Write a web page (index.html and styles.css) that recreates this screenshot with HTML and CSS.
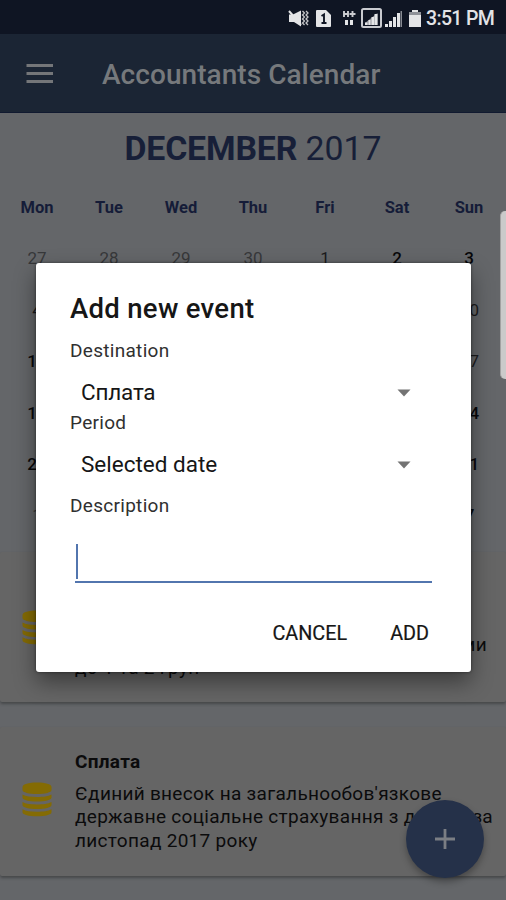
FILE: index.html
```html
<!DOCTYPE html>
<html lang="uk">
<head>
<meta charset="utf-8">
<title>Accountants Calendar</title>
<link rel="stylesheet" href="styles.css">
</head>
<body>
<div class="screen">
  <header class="status">
    <svg class="status-icons" width="136" height="24" viewBox="0 0 136 24" fill="#e4e5e7">
      <path d="M1 8.500h4l8-4v16l-7-4.500H1z"/>
      <path d="M1 5l12 14" stroke="#e4e5e7" stroke-width="2"/>
      <path d="M14.500 5l2 2-2 2 2 2-2 2 2 2-2 2 2 2M18 5l2 2-2 2 2 2-2 2 2 2-2 2 2 2" fill="none" stroke="#c4c5c8" stroke-width="1.3"/>
      <path d="M29 4h9l5 5v11a1 1 0 0 1-1 1H29a1 1 0 0 1-1-1V5a1 1 0 0 1 1-1z"/>
      <path d="M33.500 10l2.500-1.500V17M33.500 17h5" fill="none" stroke="#0f1523" stroke-width="1.900"/>
      <path d="M56 5v6M60 5v6M56 8h4M61.500 8h6M64.500 5v6" fill="none" stroke="#cbccd0" stroke-width="1.900"/>
      <path d="M57 14h3v5h-3zM62 14h3v5h-3z"/>
      <rect x="74" y="3" width="19" height="18" rx="1.500" fill="none" stroke="#c9cbd0" stroke-width="2"/>
      <path d="M77 19V17L89.500 7v12z" fill="#8d9097"/>
      <path d="M77 16.500h2.500v2.500H77zM80.500 14h2v5h-2zM83.500 11h2.500v8h-2.500zM86.500 8h3v11h-3z"/>
      <path d="M97 18h3v3h-3zM101 15h3v6h-3zM105 11h3v10h-3zM109 7h3v14h-3z"/>
      <path d="M112.500 5h1.500v16h-1.500z" fill="#888b93"/>
      <path d="M124 4h6v2h3v15h-12V6h3z"/><path d="M121 6h12v3h-12z" fill="#8f9299"/>
    </svg>
    <span class="clock">3:51 PM</span>
  </header>

  <div class="appbar">
    <svg class="menu" width="28" height="21" viewBox="0 0 28 21" fill="#747679"><path d="M.5 1h26.500v3H.5zM.5 9h26.500v3H.5zM.5 17h26.500v3H.5z"/></svg>
    <h1>Accountants Calendar</h1>
  </div>

  <main>
    <section class="calendar">
      <h2><b>DECEMBER</b> 2017</h2>
      <div class="week names"><span>Mon</span><span>Tue</span><span>Wed</span><span>Thu</span><span>Fri</span><span>Sat</span><span>Sun</span></div>
      <div class="week"><i>27</i><i>28</i><i>29</i><i>30</i><span>1</span><b>2</b><b>3</b></div>
      <div class="week"><span>4</span><span class="last">10</span></div>
      <div class="week"><b>11</b><span class="last">17</span></div>
      <div class="week"><b>18</b><b class="last">24</b></div>
      <div class="week"><b>25</b><b class="last">31</b></div>
      <div class="week"><i>1</i><b class="last">7</b></div>
    </section>

    <article class="card first">
      <svg class="coins" width="30" height="35" viewBox="0 0 30 35"><use href="#coins"/></svg>
      <div class="text">
        <p><span class="end">ми</span>до 1 та 2 груп</p>
      </div>
    </article>
    <article class="card">
      <svg class="coins" width="30" height="35" viewBox="0 0 30 35">
        <g id="coins" fill="#846b04">
          <path d="M.5 5C.5 2 7 .5 15 .5S29.500 2 29.500 5v3c0 2.500-6.500 4-14.500 4S.5 10.500.5 8z"/>
          <path id="coin" d="M.5 12.500c3 1.800 8.500 2.500 14.500 2.500s11.500-.7 14.500-2.500v3c0 2.500-6.500 4-14.500 4S.5 18 .5 15.500z"/>
          <use href="#coin" y="7.400"/>
          <use href="#coin" y="14.800"/>
        </g>
      </svg>
      <div class="text">
        <h3>Сплата</h3>
        <p>Єдиний внесок на загальнообов'язкове<br>державне соціальне страхування з доходу за<br>листопад 2017 року</p>
      </div>
    </article>
  </main>

  <div class="fab"><svg width="22" height="22" viewBox="0 0 22 22"><path d="M11 1v20M1 11h20" stroke="#7b7e84" stroke-width="2.800"/></svg></div>
  <div class="edge"></div>

  <section class="dialog">
    <h2>Add new event</h2>
    <label>Destination</label>
    <div class="select"><span class="v1">Сплата</span><svg width="14" height="8" viewBox="0 0 14 8"><path d="M.5.5h13L7 7.500z" fill="#737373"/></svg></div>
    <label>Period</label>
    <div class="select second"><span>Selected date</span><svg width="14" height="8" viewBox="0 0 14 8"><path d="M.5.5h13L7 7.500z" fill="#737373"/></svg></div>
    <label>Description</label>
    <div class="input"><div class="caret"></div></div>
    <div class="actions"><span class="cancel">CANCEL</span><span class="add">ADD</span></div>
  </section>
</div>
</body>
</html>
```
FILE: styles.css
```css
* { box-sizing: border-box; margin: 0; padding: 0; }
body { width: 506px; height: 900px; overflow: hidden; font-family: Roboto, "Liberation Sans", sans-serif; }
.screen { position: relative; width: 506px; height: 900px; overflow: hidden; background: #646669; color: #0b0b0c; }
.status { height: 34px; background: #0f1523; display: flex; align-items: center; padding-left: 288px; }
.status-icons { flex: none; margin-top: 1px; }
.clock { color: #e2e3e6; font-size: 19.5px; font-weight: 500; line-height: 34px; margin-left: 2px; padding-top: 3px; letter-spacing: -.65px; white-space: nowrap; }
.appbar { height: 79px; background: #1b2534; border-bottom: 1px solid #111a30; display: flex; align-items: center; padding-left: 26px; }
.menu { flex: none; margin-top: 1px; }
.appbar h1 { margin-left: 48px; margin-top: 2px; font-size: 28px; font-weight: 500; letter-spacing: .05px; color: #76797c; white-space: nowrap; }
.calendar { height: 439px; padding: 14px 1px 0; }
.calendar h2 { font-size: 33.8px; line-height: 44px; font-weight: 400; text-align: center; color: #171f38; white-space: nowrap; }
.calendar h2 b { font-weight: 700; letter-spacing: -.15px; }
.week { display: grid; grid-template-columns: repeat(7, 72px); height: 51.4px; line-height: 51.4px; text-align: center; font-size: 17px; color: #1b1b1d; }
.week b { font-weight: 500; color: #08080a; }
.week i { font-style: normal; color: #37383a; }
.week .last { grid-column: 7; padding-left: 1px; }
.week.names { font-weight: 700; font-size: 16.5px; color: #151c38; margin-top: 11px; }
.card { height: 149px; margin-bottom: 25px; background: #656565; border-radius: 2px; box-shadow: 0 2px 3px #46484a; display: flex; padding: 23px 0 0 22px; }
.card.first { height: 150px; padding-top: 26px; }
.coins { flex: none; margin-top: 32px; }
.card .text { margin-left: 23px; white-space: nowrap; }
.card h3 { font-size: 19px; line-height: 23px; font-weight: 700; letter-spacing: .3px; }
.card p { margin-top: 9px; font-size: 19px; line-height: 23.300px; letter-spacing: .3px; }
.card.first p { margin-top: 55px; }
.end { display: block; width: 412px; text-align: right; }
.fab { position: absolute; left: 406px; top: 800px; width: 78px; height: 78px; border-radius: 50%; background: #253149; display: flex; align-items: center; justify-content: center; box-shadow: 0 4px 7px rgba(0,0,0,.3); }
.edge { position: absolute; right: 0; top: 211px; width: 6px; height: 168px; border-radius: 5px 0 0 5px; background: #cacaca; border-left: 1px solid #a2a2a2; }
.dialog { position: absolute; left: 36px; top: 263px; width: 435px; height: 409px; border-radius: 3px; background: #fff; padding: 28px 40px 0 34px; box-shadow: 0 10px 22px rgba(0,0,0,.42), 0 0 3px rgba(0,0,0,.5); color: #161616; }
.dialog h2 { font-size: 27.5px; line-height: 36px; font-weight: 500; letter-spacing: .3px; white-space: nowrap; }
.dialog label { display: block; font-size: 19px; line-height: 24px; color: #303030; margin-top: 12px; letter-spacing: .3px; }
.select { display: flex; align-items: center; justify-content: space-between; height: 36px; padding: 0 20px 0 11px; margin-top: 12px; font-size: 22.5px; }
.select span { padding-bottom: 2px; }
.v1 { letter-spacing: -.2px; }
.select + label { margin-top: 0; }
.select.second + label { margin-top: 11px; }
.input { height: 63px; margin: 2px 0 0 5px; border-bottom: 2px solid #5275ae; width: 357px; padding-top: 24px; }
.caret { width: 2px; height: 35px; background: #5275ae; margin-left: 1px; }
.actions { display: flex; justify-content: flex-end; gap: 43px; margin-top: 38px; padding-right: 2px; font-size: 19.8px; line-height: 26px; font-weight: 400; -webkit-text-stroke: .2px #161616; }
```
